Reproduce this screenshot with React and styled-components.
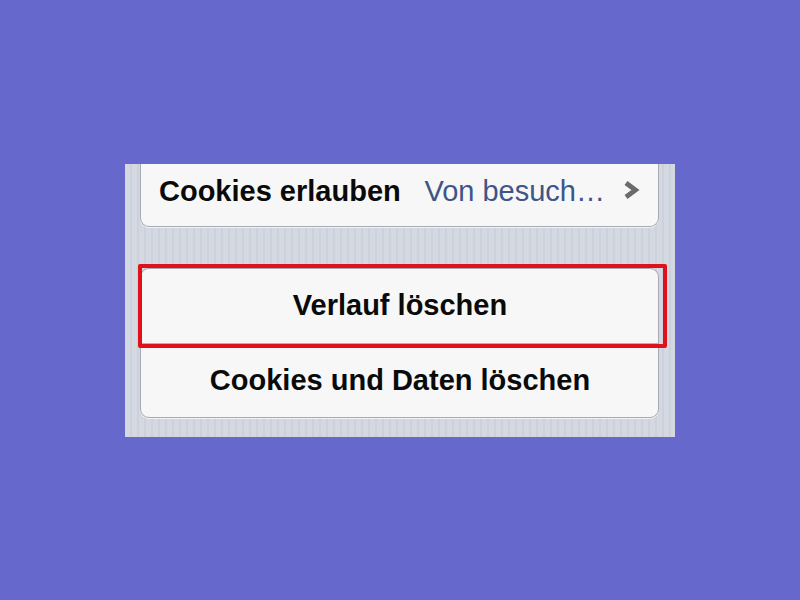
import React from 'react';
import styled, { createGlobalStyle } from 'styled-components';

const GlobalStyle = createGlobalStyle`
  html, body {
    margin: 0;
    padding: 0;
    background: #6669cb;
  }
  #root {
    width: 800px;
    height: 600px;
  }
`;

const Page = styled.div`
  width: 800px;
  height: 600px;
  display: flex;
  align-items: center;
  justify-content: center;
  font-family: "Liberation Sans", Arial, Helvetica, sans-serif;
`;

const Screen = styled.div`
  width: 550px;
  height: 273px;
  box-sizing: border-box;
  padding: 0 16px 20px 15px;
  display: flex;
  flex-direction: column;
  gap: 41px;
  overflow: hidden;
  background: repeating-linear-gradient(
    90deg,
    #d4d8e1 0 5px,
    #cdd1db 5px 7px
  );
`;

const Card = styled.div`
  position: relative;
  background: #f7f7f7;
  border: 1px solid #a7aab0;
  border-radius: 9px;
  box-shadow: 0 1px 0 rgba(255, 255, 255, 0.7);
  ${p => p.$cut && `
    border-top: none;
    border-top-left-radius: 0;
    border-top-right-radius: 0;
  `}
`;

const Row = styled.div`
  height: ${p => p.$h}px;
  box-sizing: border-box;
  display: flex;
  align-items: center;
  justify-content: ${p => (p.$center ? 'center' : 'flex-start')};
  padding: 0 17px ${p => p.$lift || 0}px 18px;
  font-size: 29px;
  font-weight: bold;
  color: #0a0a0a;
  & + & {
    border-top: 1px solid #b0b3b8;
  }
`;

const Label = styled.span`
  white-space: nowrap;
`;

const Value = styled.span`
  margin-left: auto;
  font-weight: normal;
  color: #3e5587;
  white-space: nowrap;
`;

const Chevron = styled.svg`
  width: 20px;
  height: 20px;
  margin-left: 16px;
  margin-bottom: 4px;
  flex-shrink: 0;
  display: block;
`;

const Highlight = styled.div`
  position: absolute;
  left: -3px;
  top: -5px;
  width: 529px;
  height: 84px;
  box-sizing: border-box;
  border: 4px solid #e0111b;
  border-radius: 2px;
  pointer-events: none;
`;

export default function App() {
  return (
    <>
      <GlobalStyle />
      <Page>
        <Screen>
          <Card $cut>
            <Row $h={62} $lift={6}>
              <Label>Cookies erlauben</Label>
              <Value>Von besuch…</Value>
              <Chevron viewBox="0 0 20 20">
                <path d="M5 3 L14.5 10 L5 17" fill="none" stroke="#6b6b6b" strokeWidth="4.8" strokeLinejoin="miter" />
              </Chevron>
            </Row>
          </Card>
          <Card>
            <Row $h={74} $center>Verlauf löschen</Row>
            <Row $h={74} $center>Cookies und Daten löschen</Row>
            <Highlight />
          </Card>
        </Screen>
      </Page>
    </>
  );
}
